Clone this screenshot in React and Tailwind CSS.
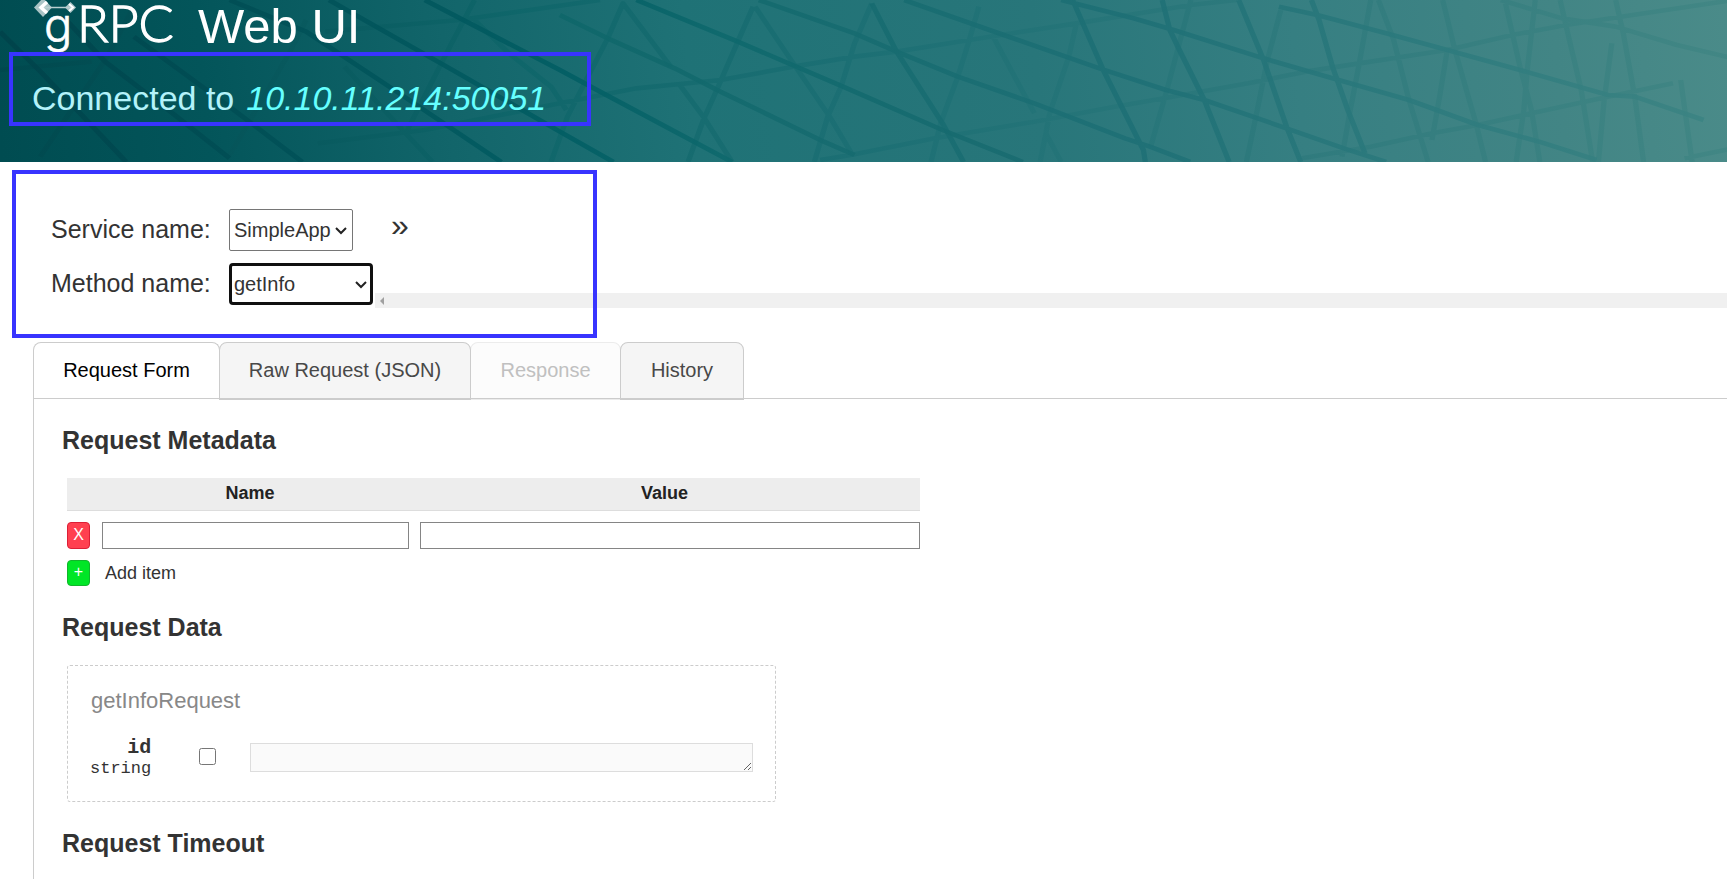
import React from "react";

const DARK_LINES = [
  "M0 95L110 220L330 486",
  "M165 50L275 185L440 330L600 475",
  "M350 110L600 320L790 486",
  "M600 0L800 95L1050 285L1310 486",
  "M860 0L1190 215L1463 395L1603 486",
  "M1110 0L1463 210L1593 290L1913 486",
  "M1663 0L1928 125L2203 260L2463 390L2673 486",
];

const MID_LINES = [
  "M1463 45L1588 115L1763 205L1883 275L2153 425L2233 465",
  "M1983 0L2233 100L2343 155L2503 230L2703 310L2940 415L3005 440L3110 486",
  "M2363 0L2623 105L2873 205L3047 270L3147 300L3362 385L3512 445L3622 486",
  "M2773 0L2843 20L2962 55L3067 90L3302 175L3482 235L3682 300L3862 375L4022 425L4172 480",
  "M3037 0L3057 90L3082 150L3147 300L3212 486",
  "M3237 0L3302 180L3362 380L3399 486",
  "M2803 0L2883 210L2988 450L2993 486",
  "M3342 20L3442 45L3622 100L3782 150L3972 210L4202 285L4272 290L4452 360",
  "M3427 0L3447 60L3482 200L3522 330L3567 460",
  "M2278 10L2343 155L2463 370L2518 486",
];

const SOFT_LINES = [
  "M105 470L275 180L345 30",
  "M600 465L700 270L760 150L800 60",
  "M900 200L1060 400L1130 486",
  "M1060 400L1180 130L1240 0",
  "M1240 60L1330 160L1440 260L1480 330",
  "M1440 486L1483 350L1523 260L1588 115L1628 10L1753 200",
  "M0 210L240 185",
  "M850 95L1200 60L1568 0",
  "M830 430L1110 390L1463 310L1663 265L1883 240L2073 200L2233 170L2343 155L2533 120L2813 70L3112 15L3232 0",
  "M1968 20L1928 125L1873 270L1838 360L1798 486",
  "M1773 250L1838 350L1913 486",
  "M1973 20L2073 190L2168 350L2228 465",
  "M2278 10L2233 130L2198 260L2163 350L2128 486",
  "M2558 20L2533 120L2503 230L2458 370L2433 486",
  "M2593 105L2703 340",
  "M2813 70L2793 170L2743 340L2733 400L2773 486M2733 400L2718 486",
  "M2143 480L2223 465L2443 415L2703 365L2913 320L3042 295L3262 250L3412 215L3552 190L3782 150L3952 105L4092 75L4530 0",
  "M3112 0L3082 130L3047 280L3007 440",
  "M3347 30L3312 180L3282 350L3257 486",
  "M3582 0L3552 190L3527 340L3507 470",
  "M3602 0L3642 120L3682 300L3732 486",
  "M3770 0L3802 150L3857 370L3882 486",
  "M3782 150L3762 290L3742 420",
  "M3932 0L3972 200L4002 330L4024 486",
  "M4077 0L4097 100L4132 270L4162 486",
  "M4222 0L4242 100L4272 290L4295 486",
  "M4392 240L4404 340L4422 486",
  "M4012 0L3992 200L3982 330L3962 486",
  "M4212 130L4192 300L4177 486",
  "M3402 475L3582 440L3742 400L3862 375L4002 340L4202 290L4372 250",
  "M3922 0L4082 55L4222 80L4382 135L4530 175",
  "M4402 475L4530 445",
];

function MeshBackground() {
  return (
    <svg
      className="absolute inset-0 h-full w-full"
      viewBox="0 0 4513 486"
      preserveAspectRatio="none"
      aria-hidden="true"
    >
      <defs>
        <linearGradient id="mesh-base" gradientUnits="userSpaceOnUse" x1="0" y1="420" x2="4513" y2="60">
          <stop offset="0" stopColor="#004c51" />
          <stop offset="0.12" stopColor="#03555a" />
          <stop offset="0.26" stopColor="#12656a" />
          <stop offset="0.4" stopColor="#1f7276" />
          <stop offset="0.6" stopColor="#28767a" />
          <stop offset="0.75" stopColor="#367f82" />
          <stop offset="0.9" stopColor="#428585" />
          <stop offset="1" stopColor="#4a8b89" />
        </linearGradient>
        <linearGradient id="mesh-dark" gradientUnits="userSpaceOnUse" x1="0" y1="0" x2="2700" y2="0">
          <stop offset="0" stopColor="#00424a" />
          <stop offset="0.55" stopColor="#005d63" />
          <stop offset="0.7" stopColor="#0d686c" />
          <stop offset="1" stopColor="#196b70" />
        </linearGradient>
        <linearGradient id="mesh-mid" gradientUnits="userSpaceOnUse" x1="1400" y1="0" x2="4513" y2="0">
          <stop offset="0" stopColor="#0d6669" />
          <stop offset="0.5" stopColor="#1d6f75" />
          <stop offset="0.75" stopColor="#2c7a7d" />
          <stop offset="1" stopColor="#3c8483" />
        </linearGradient>
        <linearGradient id="mesh-soft" gradientUnits="userSpaceOnUse" x1="0" y1="0" x2="4513" y2="0">
          <stop offset="0" stopColor="#00474d" />
          <stop offset="0.3" stopColor="#0d6569" />
          <stop offset="0.5" stopColor="#1a6e73" />
          <stop offset="0.75" stopColor="#2d797c" />
          <stop offset="1" stopColor="#3f8583" />
        </linearGradient>
      </defs>
      <rect width="4513" height="486" fill="url(#mesh-base)" />
      <g fill="none" strokeLinejoin="round">
        <path d={SOFT_LINES.join("")} stroke="url(#mesh-soft)" strokeWidth="14" opacity="0.75" />
        <path d={MID_LINES.join("")} stroke="url(#mesh-mid)" strokeWidth="14" opacity="0.85" />
        <path d={DARK_LINES.join("")} stroke="url(#mesh-dark)" strokeWidth="14" opacity="0.85" />
      </g>
    </svg>
  );
}

function Logo() {
  return (
    <svg className="block h-[52px] w-[140px] shrink-0" viewBox="34 0 140 52" role="img" aria-label="gRPC">
      <path d="M34 7.500L43 -2L52 7.500L43 17Z" fill="#a9c3c5" />
      <path d="M65 7.500L70.500 2L76 7.500L70.500 13Z" fill="#a9c3c5" />
      <path d="M41 7.500H71" stroke="#b9cfd0" strokeWidth="1.500" fill="none" />
      <path d="M47 2L41 7.500L47 13" stroke="#fff" strokeWidth="3.500" fill="none" />
      <path d="M69 4L73 7.500L69 11" stroke="#fff" strokeWidth="2" fill="none" />
      <g fill="#fff" stroke="#fff" fontWeight="300">
        <text x="44" y="42" fontSize="47" strokeWidth="0.600" fontFamily="Inter, sans-serif">
          g
        </text>
        <text x="77" y="42" fontSize="52" strokeWidth="1.300" fontFamily="Lato, sans-serif">
          RPC
        </text>
      </g>
    </svg>
  );
}

function Picker({ id, label, options, focused, className, children }) {
  return (
    <div className="flex items-start">
      <label htmlFor={id} className="w-[178px] shrink-0 text-[25px] leading-10">
        {label}
      </label>
      <div className={"relative shrink-0 " + className}>
        <select
          id={id}
          className={
            "block h-[42px] w-full appearance-none bg-white text-[20px] leading-6 text-[#333] outline-none " +
            (focused
              ? "rounded-[4px] border-3 border-[#101010] pl-[2px]"
              : "rounded-[2px] border border-[#767676] pl-1")
          }
        >
          {options.map((o) => (
            <option key={o}>{o}</option>
          ))}
        </select>
        <svg
          className="pointer-events-none absolute top-[18px] right-[6px] h-2 w-3"
          viewBox="0 0 12 8"
          fill="none"
          stroke="#222"
          strokeWidth="2"
          aria-hidden="true"
        >
          <path d="M1 1L6 6L11 1" />
        </svg>
      </div>
      {children}
    </div>
  );
}

const TAB_BASE = "-mr-px h-[58px] shrink-0 rounded-t-[8px] border text-center text-[20px] leading-6 whitespace-nowrap ";
const TAB_IDLE = "border-b-2 border-[#ccc] bg-[#f5f5f5] pb-px text-[#484848] ";

function Heading({ children, className = "" }) {
  return <h2 className={"text-[25px] leading-[30px] font-bold text-[#333] " + className}>{children}</h2>;
}

export default function App() {
  return (
    <div className="relative flex min-h-screen flex-col overflow-hidden bg-white font-['Liberation_Sans',Arial,sans-serif] text-[#333]">
      <header className="relative h-[162px] shrink-0 overflow-hidden">
        <MeshBackground />
        <div className="relative pl-[34px]">
          <div className="flex h-[52px] items-start gap-6">
            <Logo />
            <h1 className="text-[49px] leading-[52px] whitespace-nowrap text-white">Web UI</h1>
          </div>
          <p className="-ml-[2px] flex gap-3 pt-[26px] text-[34px] leading-10 whitespace-nowrap text-[#b3f2fa]">
            <span>Connected to</span>
            <em className="text-[#66ffff]">10.10.11.214:50051</em>
          </p>
        </div>
      </header>

      <form className="flex flex-col gap-3 pt-[47px] pb-[34px] pl-[51px]">
        <Picker id="service" label="Service name:" options={["SimpleApp"]} className="w-[124px]">
          <button type="button" aria-label="Show service description" className="ml-[38px] text-[32px] leading-8">
            »
          </button>
        </Picker>
        <Picker id="method" label="Method name:" options={["getInfo"]} focused className="w-[144px]">
          <div className="ml-[2px] flex h-[15px] flex-1 items-center self-end bg-[#f0f0f0] pl-[5px]">
            <svg className="h-2 w-1" viewBox="0 0 4 8" aria-hidden="true">
              <path d="M4 0V8L0 4Z" fill="#a0a0a0" />
            </svg>
          </div>
          <span className="h-[45px]" />
        </Picker>
      </form>

      <div role="tablist" className="ml-[33px] flex shrink-0">
        <button
          role="tab"
          aria-selected="true"
          className={TAB_BASE + "w-[187px] border-b-0 border-[#ccc] bg-white pb-[3px] text-black"}
        >
          Request Form
        </button>
        <button role="tab" aria-selected="false" className={TAB_BASE + TAB_IDLE + "relative z-10 w-[252px]"}>
          Raw Request (JSON)
        </button>
        <button
          role="tab"
          aria-selected="false"
          disabled
          className={TAB_BASE + "w-[151px] border-b-2 border-[#ececec] bg-[#fcfcfc] pb-px text-[#c0c0c0]"}
        >
          Response
        </button>
        <button role="tab" aria-selected="false" className={TAB_BASE + TAB_IDLE + "w-[124px]"}>
          History
        </button>
      </div>

      <main role="tabpanel" className="relative -mt-[2px] ml-[33px] flex-1 border-t border-l border-[#ccc] pt-[26px] pl-7">
        <Heading>Request Metadata</Heading>
        <table className="mt-[23px] ml-[5px] w-[853px] max-w-full table-fixed border-separate border-spacing-0 text-[18px] leading-6">
          <colgroup>
            <col className="w-[24px]" />
            <col className="w-[318px]" />
            <col />
          </colgroup>
          <thead>
            <tr className="bg-[#ededed] text-[#222]">
              <td className="border-b border-[#ddd] p-0" />
              <th className="border-b border-[#ddd] p-0 pt-[3px] pb-[5px] text-center font-bold">Name</th>
              <th className="border-b border-[#ddd] p-0 pt-[3px] pb-[5px] text-center font-bold">Value</th>
            </tr>
          </thead>
          <tbody>
            <tr>
              <td className="p-0 pt-[11px]">
                <button
                  aria-label="Remove item"
                  className="block h-[27px] w-[23px] rounded-[4px] border border-[#dc1f36] bg-[#ff4050] pb-[2px] text-center text-[16px] leading-5 text-white"
                >
                  X
                </button>
              </td>
              <td className="p-0 pt-[11px] pl-[11px]">
                <input aria-label="Name" className="block h-[27px] w-full border border-[#858585] bg-white px-1" />
              </td>
              <td className="p-0 pt-[11px] pl-[11px]">
                <input aria-label="Value" className="block h-[27px] w-full border border-[#858585] bg-white px-1" />
              </td>
            </tr>
            <tr>
              <td className="p-0 pt-[11px]">
                <button
                  id="add-item"
                  aria-label="Add item"
                  className="block h-[26px] w-[23px] rounded-[4px] border border-[#12b52c] bg-[#00e626] pb-[2px] text-center text-[16px] leading-5 text-white"
                >
                  +
                </button>
              </td>
              <td colSpan={2} className="p-0 pt-[11px] pl-[14px]">
                <label htmlFor="add-item" className="block">
                  Add item
                </label>
              </td>
            </tr>
          </tbody>
        </table>

        <Heading className="mt-[26px]">Request Data</Heading>
        <section className="mt-[23px] ml-[5px] w-[709px] max-w-full rounded-[3px] border border-dashed border-[#ccc] px-[22px] pt-[21px] pb-[22px]">
          <h3 className="pl-px text-[22px] leading-7 text-[#888]">getInfoRequest</h3>
          <div className="mt-[22px] flex items-start">
            <label
              htmlFor="field-id"
              className="flex flex-col items-end font-['Liberation_Mono','Courier_New',monospace] text-[#333]"
            >
              <strong className="text-[20px] leading-[22px]">id</strong>
              <span className="text-[17px] leading-5">string</span>
            </label>
            <input type="checkbox" aria-label="Set id" className="mt-[11px] ml-12 size-[17px] shrink-0" />
            <textarea
              id="field-id"
              rows={1}
              className="mt-[6px] ml-[34px] block h-[29px] min-w-0 flex-1 resize overflow-hidden border border-[#ddd] bg-[#fafafa]"
            />
          </div>
        </section>

        <Heading className="mt-[26px]">Request Timeout</Heading>
      </main>

      <div className="pointer-events-none absolute top-[52px] left-[9px] h-[74px] w-[582px] border-4 border-[#3834ff]" />
      <div className="pointer-events-none absolute top-[170px] left-[12px] h-[168px] w-[585px] border-4 border-[#3834ff]" />
    </div>
  );
}
